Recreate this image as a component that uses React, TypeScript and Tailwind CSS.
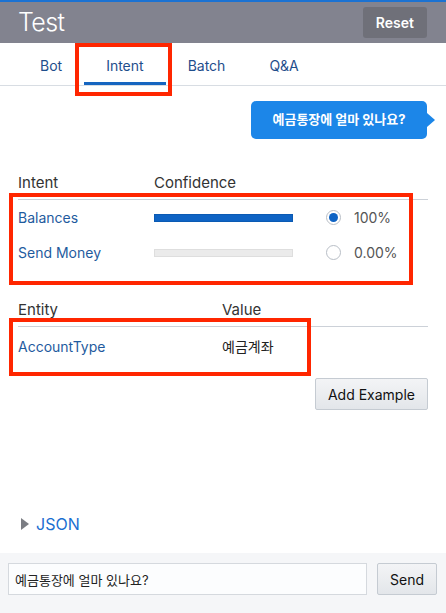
import React from 'react'

const font = { fontFamily: 'Inter, "Noto Sans CJK KR", sans-serif' }

const Radio = ({ checked }: { checked?: boolean }) => (
  <span className="w-[15px] h-[15px] rounded-full border border-[#b8bec6] bg-white flex items-center justify-center">
    {checked && <span className="w-[9px] h-[9px] rounded-full bg-[#0e63c4]" />}
  </span>
)

const App = () => {
  const tabs = ['Bot', 'Intent', 'Batch', 'Q&A']
  return (
    <div className="relative w-[446px] h-[613px] flex flex-col bg-white overflow-hidden" style={font}>
      {/* header */}
      <div className="h-[43px] bg-[#82838f] border-t-2 border-[#1b72d2] flex items-center justify-between pl-[18px] pr-[19px]">
        <span className="text-[25px] font-light text-white tracking-tight">Test</span>
        <button className="h-[31px] px-[13px] rounded-[3px] bg-[#6f7079] text-white text-[14px] font-semibold">Reset</button>
      </div>

      {/* tabs */}
      <div className="h-[43px] flex pl-[18px] border-b border-[#d8dde3]">
        {tabs.map((t) => (
          <div
            key={t}
            className={
              'px-[22px] pt-[6px] flex items-center text-[14px] text-[#1f4e8c] border-b-[3px] ' +
              (t === 'Intent' ? 'border-[#1565c0]' : 'border-transparent')
            }
          >
            {t}
          </div>
        ))}
      </div>

      <div className="flex-1 flex flex-col px-[18px]">
        {/* bubble */}
        <div className="flex justify-end mt-[15px] pr-[1px]">
          <div className="relative h-[38px] w-[176px] rounded-[5px] bg-[#1c86e8] flex items-center justify-center text-white text-[13px] font-bold">
            예금통장에 얼마 있나요?
            <span className="absolute right-[-8px] top-[12px] w-0 h-0 border-y-[7px] border-y-transparent border-l-[8px] border-l-[#1c86e8]" />
          </div>
        </div>

        {/* intents */}
        <div className="mt-[33px]">
          <div className="flex h-[22px] items-center border-b border-[#ccd1d8] pb-[5px] box-content text-[15px] text-[#333]">
            <span className="w-[136px]">Intent</span>
            <span>Confidence</span>
          </div>
          <div className="flex items-center h-[35px] text-[14px]">
            <span className="w-[136px] text-[#1f5b9e]">Balances</span>
            <span className="w-[139px] h-[8px] bg-[#0e63c4] border border-[#0b5ab3]" />
            <span className="ml-[33px]"><Radio checked /></span>
            <span className="ml-[13px] text-[#555]">100%</span>
          </div>
          <div className="flex items-center h-[35px] text-[14px]">
            <span className="w-[136px] text-[#1f5b9e]">Send Money</span>
            <span className="w-[139px] h-[8px] bg-[#ebebeb] border border-[#dedede]" />
            <span className="ml-[33px]"><Radio /></span>
            <span className="ml-[13px] text-[#555]">0.00%</span>
          </div>
        </div>

        {/* entities */}
        <div className="mt-[29px]">
          <div className="flex h-[22px] items-center border-b border-[#ccd1d8] pb-[5px] box-content text-[15px] text-[#333]">
            <span className="w-[204px]">Entity</span>
            <span>Value</span>
          </div>
          <div className="flex items-center h-[38px] text-[14px]">
            <span className="w-[204px] text-[#1f5b9e]">AccountType</span>
            <span className="text-[#222]">예금계좌</span>
          </div>
        </div>

        <div className="flex justify-end mt-[13px]">
          <button className="h-[32px] px-[12px] rounded-[2px] border border-[#c5cbd2] bg-gradient-to-b from-[#f3f4f6] to-[#e3e6ea] text-[14px] text-[#111]">
            Add Example
          </button>
        </div>

        <div className="mt-auto mb-[17px] flex items-center pl-[3px]">
          <span className="w-0 h-0 border-y-[6px] border-y-transparent border-l-[8px] border-l-[#7b7d83]" />
          <span className="ml-[7px] text-[16px] text-[#1a6fd1]">JSON</span>
        </div>
      </div>

      {/* footer */}
      <div className="h-[60px] bg-[#f5f6f8] flex items-start pt-[10px] pl-[8px] pr-[9px] gap-[10px]">
        <input
          defaultValue="예금통장에 얼마 있나요?"
          className="flex-1 h-[32px] border border-[#d5d9de] bg-[#fcfdfe] px-[6px] text-[13px] text-[#222] outline-none"
          style={font}
        />
        <button className="w-[60px] h-[32px] rounded-[2px] border border-[#c5cbd2] bg-gradient-to-b from-[#f3f4f6] to-[#e3e6ea] text-[14px] text-[#111]">
          Send
        </button>
      </div>

      {/* red annotation boxes */}
      <div className="absolute left-[75px] top-[43px] w-[97px] h-[53px] border-4 border-[#ff2600] pointer-events-none" />
      <div className="absolute left-[9px] top-[193px] w-[404px] h-[92px] border-4 border-[#ff2600] pointer-events-none" />
      <div className="absolute left-[9px] top-[318px] w-[302px] h-[58px] border-4 border-[#ff2600] pointer-events-none" />
    </div>
  )
}

export default App
